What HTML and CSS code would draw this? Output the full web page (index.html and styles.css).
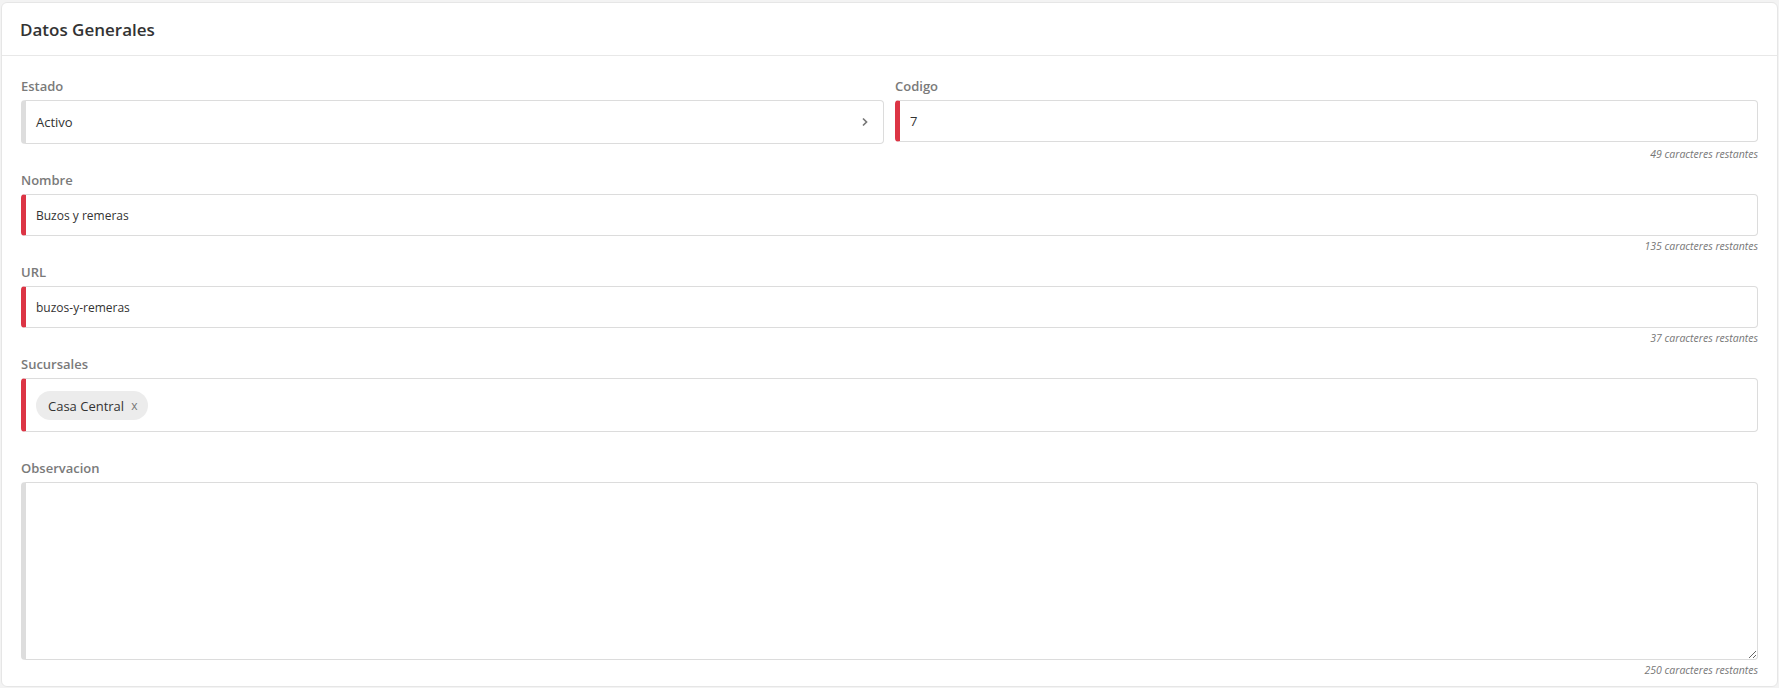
FILE: index.html
```html
<!DOCTYPE html>
<html lang="es">
<head>
  <meta charset="UTF-8" />
  <meta name="viewport" content="width=device-width, initial-scale=1.0"/>
  <title>Datos Generales</title>
  <link rel="stylesheet" href="styles.css">
</head>
<body>
  <div class="card">
    <div class="card-header">
      <h2>Datos Generales</h2>
    </div>

    <div class="card-body">
      <!-- Estado / Codigo -->
      <div class="row">
        <div class="group">
          <label>Estado</label>
          <div class="select">
            <span>Activo</span>
            <svg class="chevron" width="8" height="10" viewBox="0 0 8 10">
              <polyline points="2,1.5 5.5,5 2,8.5" fill="none" stroke="#777" stroke-width="1.7"/>
            </svg>
          </div>
        </div>
        <div class="group">
          <label for="codigo">Codigo</label>
          <input type="text" id="codigo" class="field required" value="7" />
          <div class="helper first">49 caracteres restantes</div>
        </div>
      </div>

      <div class="group">
        <label for="nombre">Nombre</label>
        <input type="text" id="nombre" class="field required small" value="Buzos y remeras" />
        <div class="helper">135 caracteres restantes</div>
      </div>

      <div class="group">
        <label for="url">URL</label>
        <input type="text" id="url" class="field required small" value="buzos-y-remeras" />
        <div class="helper">37 caracteres restantes</div>
      </div>

      <div class="group">
        <label>Sucursales</label>
        <div class="multi required">
          <span class="chip">Casa Central <span class="chip-x">x</span></span>
        </div>
        <div class="helper"></div>
      </div>

      <div class="group last">
        <label for="obs">Observacion</label>
        <textarea id="obs" class="field area"></textarea>
        <div class="helper">250 caracteres restantes</div>
      </div>
    </div>
  </div>
</body>
</html>
```

FILE: styles.css
```css
html {
  background-color: #f3f3f3;
}
body {
  margin: 0;
  padding: 2px 1px 0;
  font-family: "Open Sans", Arial, sans-serif;
  color: #333;
}
.card {
  background-color: #fff;
  border: 1px solid #e6e6e6;
  border-radius: 6px;
}
.card-header {
  height: 52px;
  display: flex;
  align-items: center;
  padding: 0 18px;
  border-bottom: 1px solid #e8e8e8;
}
.card-header h2 {
  margin: 0;
  font-size: 17px;
  font-weight: 600;
  color: #333;
}
.card-body {
  padding: 21px 19px 9px;
}
.row {
  display: grid;
  grid-template-columns: 1fr 1fr;
  gap: 11px;
  align-items: start;
}
.group {
  margin-bottom: 10px;
}
.group.last {
  margin-bottom: 0;
}
label {
  display: block;
  font-size: 13px;
  line-height: 18px;
  font-weight: 600;
  color: #7a7a7a;
  margin-bottom: 5px;
}
.field, .select, .multi {
  display: block;
  width: 100%;
  box-sizing: border-box;
  border: 1px solid #dcdcdc;
  border-left: 5px solid #dddddd;
  border-radius: 4px;
  background-color: #fff;
  font-family: inherit;
  color: #333;
}
.field {
  height: 42px;
  padding: 0 10px;
  font-size: 13px;
  outline: none;
}
.field.small {
  font-size: 12px;
}
.required {
  border-left-color: #dc3545;
}
.select {
  height: 44px;
  display: flex;
  align-items: center;
  justify-content: space-between;
  padding: 0 14px 0 10px;
  font-size: 13px;
}
.multi {
  padding: 12px 10px 11px;
}
.chip {
  display: inline-flex;
  align-items: center;
  height: 29px;
  padding: 0 11px 0 12px;
  border-radius: 15px;
  background-color: #ececec;
  font-size: 13px;
  color: #333;
}
.chip-x {
  margin-left: 7px;
  color: #777;
  font-size: 12px;
}
.area {
  height: 178px;
  padding: 8px 10px;
  resize: vertical;
}
.helper {
  margin-top: 3px;
  height: 14px;
  line-height: 14px;
  font-size: 10.5px;
  font-style: italic;
  color: #777;
  text-align: right;
}
.helper.first {
  margin-top: 5px;
}
```
